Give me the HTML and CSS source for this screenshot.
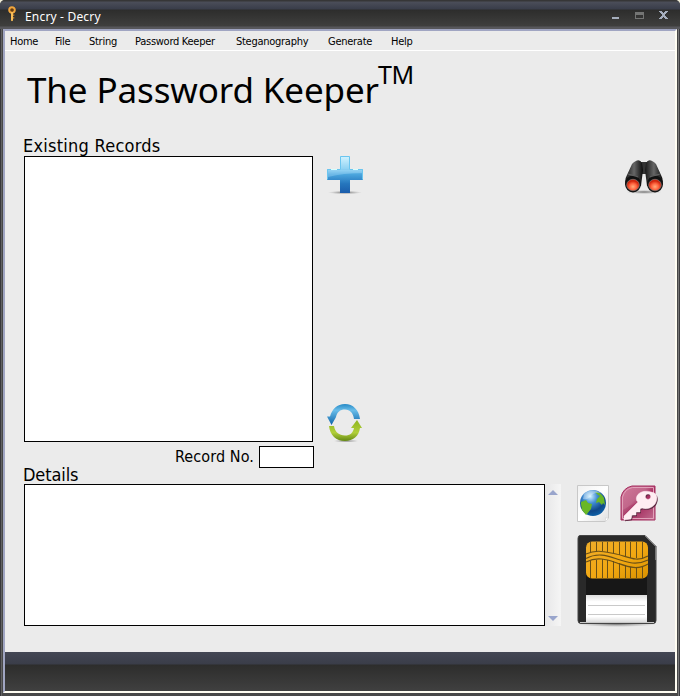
FILE: index.html
```html
<!DOCTYPE html>
<html lang="en">
<head>
<meta charset="utf-8">
<title>Encry - Decry</title>
<link rel="stylesheet" href="styles.css">
</head>
<body>
<div class="window">
  <header class="titlebar">
    <svg class="app-icon" width="8" height="16" viewBox="0 0 8 16">
      <path d="M4 1.2a2.8 2.8 0 1 0 0 5.6a2.8 2.8 0 1 0 0-5.6z" fill="#633b12" stroke="#f1a53c" stroke-width="2"/>
      <path d="M3 6h2v8.5L4 15.3 3 14.5z" fill="#f8bd57"/><path d="M5 8.5h1.3v1.3H5zM5 11.3h1.3v1.3H5z" fill="#dc8c2c"/>
    </svg>
    <span class="app-title">Encry - Decry</span>
    <svg class="controls" width="58" height="12" viewBox="0 0 58 12">
      <path d="M1 7h7v2H1z" fill="#a5aebd"/>
      <path d="M24 2h9v7h-9zM25 5v3h7V5z" fill="#747574" fill-rule="evenodd"/>
      <path d="M48 1h3v1h1v1h1V2h1V1h3v1h-1v1h-1v1h-1v2h1v1h1v1h1v1h-3V8h-1V7h-1v1h-1v1h-3V8h1V7h1V6h1V4h-1V3h-1V2h-1z" fill="#a5aebd"/>
    </svg>
  </header>
  <div class="client">
    <nav class="menu">
      <span class="m-home">Home</span><span class="m-file">File</span><span class="m-string">String</span><span class="m-keeper">Password Keeper</span><span class="m-steg">Steganography</span><span class="m-gen">Generate</span><span>Help</span>
    </nav>
    <main>
      <h1><span class="name">The Password Keeper</span><span class="tm">TM</span></h1>
      <h2 class="existing">Existing Records</h2>
      <section class="records">
        <div class="list"></div>
        <div class="tools">
          <svg width="38" height="42" viewBox="0 0 38 42">
            <defs>
              <linearGradient id="plus" x1="0" y1="0" x2="0" y2="1"><stop offset="0" stop-color="#d4f4ff"/><stop offset=".35" stop-color="#8fd2f3"/><stop offset=".5" stop-color="#4ba5dd"/><stop offset=".75" stop-color="#2576bd"/><stop offset="1" stop-color="#1a5cab"/></linearGradient>
              <radialGradient id="shade"><stop offset="0" stop-color="#555" stop-opacity=".8"/><stop offset="1" stop-color="#888" stop-opacity="0"/></radialGradient>
            </defs>
            <ellipse cx="19" cy="36.5" rx="17" ry="1.8" fill="url(#shade)"/>
            <path d="M14 0h10v13h13v11H24v13H14V24H1V13h13z" fill="url(#plus)"/>
            <path d="M14.5 13V.5h9V13M1.5 23.5v-10h13M23.5 13.5h13v10" fill="none" stroke="#6bc5ef"/>
            <path d="M2 14h34v3Q18 17 2 21z" fill="#bce9ff" opacity=".3"/>
            <path d="M5 13h6v1H5zM27 13h5v1h-5z" fill="#d5ffff"/>
          </svg>
          <svg width="38" height="40" viewBox="0 0 38 40">
            <defs>
              <linearGradient id="blue" x1="0" y1="0" x2="0" y2="1"><stop offset="0" stop-color="#2589c6"/><stop offset=".3" stop-color="#6abde9"/><stop offset="1" stop-color="#0b63a9"/></linearGradient>
              <linearGradient id="green" x1="0" y1="0" x2="0" y2="1"><stop offset="0" stop-color="#8eb51f"/><stop offset=".6" stop-color="#b1cf39"/><stop offset="1" stop-color="#648813"/></linearGradient>
            </defs>
            <ellipse cx="20" cy="39" rx="13" ry="1.3" fill="url(#shade)"/>
            <path d="M1 14.500h3C6 7 11 2 19 2c8 0 14 6 15 15h-6C27 11 24 7.500 19 7.500c-5 0-8 2.500-9 7.500l-.5 1L5.500 23z" fill="url(#blue)"/>
            <path d="M3 24h5c1 6 5 9.500 11 9.500 5 0 8-2.500 9-7.500h-3l6-8 5 8h-2C33 34 27 39 19 39 10 39 4 33 3 24z" fill="url(#green)"/>
          </svg>
        </div>
        <svg class="binoculars" width="40" height="38" viewBox="0 0 40 38">
          <defs>
            <linearGradient id="barrel"><stop offset="0" stop-color="#181818"/><stop offset=".5" stop-color="#666"/><stop offset="1" stop-color="#0a0a0a"/></linearGradient>
            <radialGradient id="lens" cx=".5" cy=".65"><stop offset="0" stop-color="#ffad7c"/><stop offset=".55" stop-color="#ff6540"/><stop offset="1" stop-color="#cf260d"/></radialGradient>
          </defs>
          <ellipse cx="20" cy="34" rx="18" ry="2" fill="url(#shade)"/>
          <path d="M16 4h8v12h-8z" fill="#333"/>
          <path d="M8 6q7-7 10-1l1 7-2 16H2q-2-6 1-11z" fill="url(#barrel)"/>
          <path d="M32 6q-7-7-10-1l-1 7 2 16h15q2-6-1-11z" fill="url(#barrel)"/>
          <ellipse cx="9" cy="26" rx="8" ry="8.500" fill="#111"/><ellipse cx="31" cy="26" rx="8" ry="8.500" fill="#111"/>
          <ellipse cx="9" cy="27" rx="6.300" ry="5.700" fill="url(#lens)" stroke="#888" stroke-width=".6"/>
          <ellipse cx="31" cy="27" rx="6.300" ry="5.700" fill="url(#lens)" stroke="#888" stroke-width=".6"/>
          <path d="M4 16l10 3M26 19l10-3" stroke="#777" stroke-width=".7"/>
        </svg>
      </section>
      <div class="record-number"><label for="record">Record No.</label><input id="record"></div>
      <h2 class="details-title">Details</h2>
      <section class="details">
        <div class="detail-box"></div>
        <div class="scrollbar"><i class="up"></i><i class="down"></i></div>
        <div class="actions">
          <div class="small-icons">
            <svg width="33" height="38" viewBox="0 0 33 38">
              <defs>
                <linearGradient id="paper" x1="0" y1="0" x2="1" y2="1"><stop offset="0" stop-color="#f1f1f1"/><stop offset=".5" stop-color="#fff"/><stop offset="1" stop-color="#e0e0e0"/></linearGradient>
                <radialGradient id="earth" cx=".4" cy=".25" r=".75"><stop offset="0" stop-color="#d1f2ff"/><stop offset=".35" stop-color="#428ed5"/><stop offset=".75" stop-color="#104788"/><stop offset="1" stop-color="#0e5fa5"/></radialGradient>
              </defs>
              <path d="M.5.500h31v33l-3 3H.500z" fill="url(#paper)" stroke="#c8c8c8"/><path d="M28.500 36.500v-4l3 1z" fill="#fff" stroke="#ddd"/>
              <circle cx="16" cy="18" r="13" fill="url(#earth)"/>
              <path d="M4 17l5-2 2 3 4 1-1 5-4 5-1 1-4-5-1-6zM18 7q6 0 9 6l1 7-2-2-1 2-3-3-3 1 1-4 3-3-2-1z" fill="#69b727"/>
              <path d="M7 9q8-7 17-1-8-1-12 5-3 2-6 1z" fill="#fff" opacity=".35"/>
            </svg>
            <svg width="40" height="38" viewBox="0 0 40 38">
              <defs><linearGradient id="pink" x1="0" y1="0" x2="1" y2="1"><stop offset="0" stop-color="#d27a9b"/><stop offset=".4" stop-color="#c1668a"/><stop offset=".55" stop-color="#a72d60"/><stop offset="1" stop-color="#d18ba8"/></linearGradient></defs>
              <path d="M12 1h23v34H1V12Q3 3 12 1z" fill="url(#pink)" stroke="#a42c5e" stroke-width="1"/>
              <path d="M12.300 2.500H33.500V33.500H2.500V12Q5 4 12.300 2.500z" fill="none" stroke="#e1a1b9"/>
              <path d="M3 25Q13 17 33 15v18H3z" fill="#981e50" opacity=".25"/>
              <path fill-rule="evenodd" d="M17 11c2-4 8-6 14-4 6 1 7 5 5 10-2 5-8 8-14 6l-2 1v3h-4v3h-4l-1 4-7 1v-4l14-14c-2-1-2-4-1-6zM28 9a2.700 2.700 0 1 0 .1 0z" fill="#5c2740" transform="translate(.9 1.200)"/>
              <path fill-rule="evenodd" d="M17 11c2-4 8-6 14-4 6 1 7 5 5 10-2 5-8 8-14 6l-2 1v3h-4v3h-4l-1 4-7 1v-4l14-14c-2-1-2-4-1-6zM28 9a2.700 2.700 0 1 0 .1 0z" fill="#ffedf2" stroke="#ffedf2" stroke-width=".5"/>
            </svg>
          </div>
          <svg class="save" width="82" height="94" viewBox="0 0 82 94">
            <defs>
              <linearGradient id="gold" x1="0" y1="0" x2="1" y2="1"><stop offset="0" stop-color="#efad2a"/><stop offset=".55" stop-color="#f2a812"/><stop offset="1" stop-color="#d99200"/></linearGradient>
              <linearGradient id="label" x1="0" y1="0" x2="0" y2="1"><stop offset="0" stop-color="#ddd"/><stop offset=".25" stop-color="#fff"/><stop offset=".8" stop-color="#fff"/><stop offset="1" stop-color="#ddd"/></linearGradient>
            </defs>
            <ellipse cx="41" cy="89" rx="40" ry="3" fill="url(#shade)"/>
            <path d="M4 .5h65l11 11v74q0 3-3 3H5q-3 0-3-3v-82q0-3 2-3z" fill="#292929" stroke="#454545"/>
            <path d="M69 1l10.500 10.500V25" fill="none" stroke="#777"/>
            <path d="M10 10h61v78H10z" fill="#171717"/>
            <rect x="10" y="6.500" width="62" height="37" rx="6" fill="url(#gold)"/>
            <path d="M14.500 7v10M20.500 7v9M26.500 7v9M31.500 7v10M37.500 7v11M43.500 7v13M49.500 7v15M54.500 7v16M60.500 7v16M66.500 7v16M14.500 26v17M20.500 25v18M26.500 24v19M31.500 25v18M37.500 26v17M43.500 28v15M49.500 30v13M54.500 32v11M60.500 32v11M66.500 31v12" stroke="#6b5017" stroke-width="1"/>
            <path d="M10 19C21 14 29 17 40 19S60 28 72 21M10 23.500C22 17 32 21 41 24s19 7 31 1M10 27C22 21 32 25 41 28s20 8 31 1" fill="none" stroke="#6b5017" stroke-width="1.200"/>
            <path d="M10 60h61v27H10z" fill="url(#label)"/><path d="M12 70.500h57M12 79.500h57" stroke="#c9c9c9"/>
            <path d="M4 87.500h74" stroke="#c8c8c8" stroke-width="1"/>
          </svg>
        </div>
      </section>
    </main>
    <footer></footer>
  </div>
</div>
</body>
</html>
```
FILE: styles.css
```css
* { box-sizing: border-box; }
body { margin: 0; background: #f2eed9; color: #000; font-family: "DejaVu Sans Condensed", "DejaVu Sans", sans-serif; font-stretch: condensed; }
.window { width: 680px; height: 696px; padding: 0 3px 3px; border-radius: 5px 5px 0 0; background: linear-gradient(90deg, #38383c 0 1px, #626262 1px 2px, #484848 2px 678px, #777 678px 679px, #3d3d40 679px); overflow: hidden; }
.titlebar { height: 29px; margin: 0 -3px; padding-left: 8px; display: flex; align-items: flex-start; background: linear-gradient(#363637 0 1px, #4b4e59 2px, #393d4a 9px, #2d2d2c 10px, #3f3f3e 26px, #57575b 27px); }
.app-icon { margin-top: 6px; }
.app-title { font-family: "Noto Sans", sans-serif; font-stretch: normal; font-size: 12px; line-height: 18px; letter-spacing: .18px; margin: 8px 0 0 9px; color: #fff; }
.controls { margin: 10px 11px 0 auto; }
.client { height: 664px; border-style: solid; border-width: 2px; border-color: #a0a5c2 #fffdf2 #fffdf2 #a0a5c2; display: flex; flex-direction: column; background: #ebebeb; }
.menu { height: 20px; flex: none; padding: 1px 0 0 5px; border-bottom: 1px solid #fff; display: flex; font-family: "DejaVu Sans Condensed", sans-serif; font-size: 11px; line-height: 20px; letter-spacing: -.27px; white-space: nowrap; }
.m-home { width: 45px; } .m-file { width: 34px; } .m-string { width: 46px; } .m-keeper { width: 101px; } .m-steg { width: 92px; } .m-gen { width: 63px; }
main { flex: 1; min-height: 0; padding-left: 19px; }
h1 { height: 83px; margin: 0; padding-left: 3px; display: flex; font-family: "Noto Sans", sans-serif; font-stretch: normal; font-weight: 400; }
.name { font-size: 35px; line-height: 48px; letter-spacing: -.12px; margin-top: 15px; width: 351px; white-space: nowrap; }
.tm { font-size: 25px; line-height: 30px; letter-spacing: -.5px; margin-top: 8px; }
h2 { margin: 0 0 0 -1px; height: 22px; font-size: 18px; line-height: 23px; font-weight: 400; white-space: nowrap; }
.existing { letter-spacing: .25px; }
.records { height: 286px; display: flex; }
.list { width: 289px; border: 1px solid #000; background: #fff; }
.tools { width: 38px; margin-left: 13px; display: flex; flex-direction: column; justify-content: space-between; }
.binoculars { margin: 2px 11px 0 auto; }
.record-number { width: 290px; height: 26px; padding-top: 4px; display: flex; justify-content: flex-end; }
.record-number label { font-size: 16px; line-height: 21px; letter-spacing: .1px; margin-right: 5px; white-space: nowrap; }
.record-number input { width: 55px; height: 22px; padding: 0; border: 1px solid #000; border-radius: 0; background: #fff; }
.details-title { height: 16px; line-height: 14px; letter-spacing: -.1px; }
.details { height: 142px; display: flex; }
.detail-box { width: 521px; border: 1px solid #000; background: #fff; }
.scrollbar { width: 16px; padding: 6px 3px 5px; background: linear-gradient(90deg, #e7e7e8, #f5f5f5); display: flex; flex-direction: column; justify-content: space-between; }
.up, .down { width: 0; height: 0; border: 5px solid transparent; }
.up { border-top: 0; border-bottom-color: #99a5cc; }
.down { border-bottom: 0; border-top-color: #99a5cc; }
.actions { margin-left: 16px; padding-top: 1px; }
.small-icons { height: 38px; display: flex; gap: 10px; }
.save { display: block; margin: 12px 0 0 -1px; }
footer { height: 39px; flex: none; background: linear-gradient(#444754, #3a3d49 12px, #2d2d2c 13px, #404040); }
```
